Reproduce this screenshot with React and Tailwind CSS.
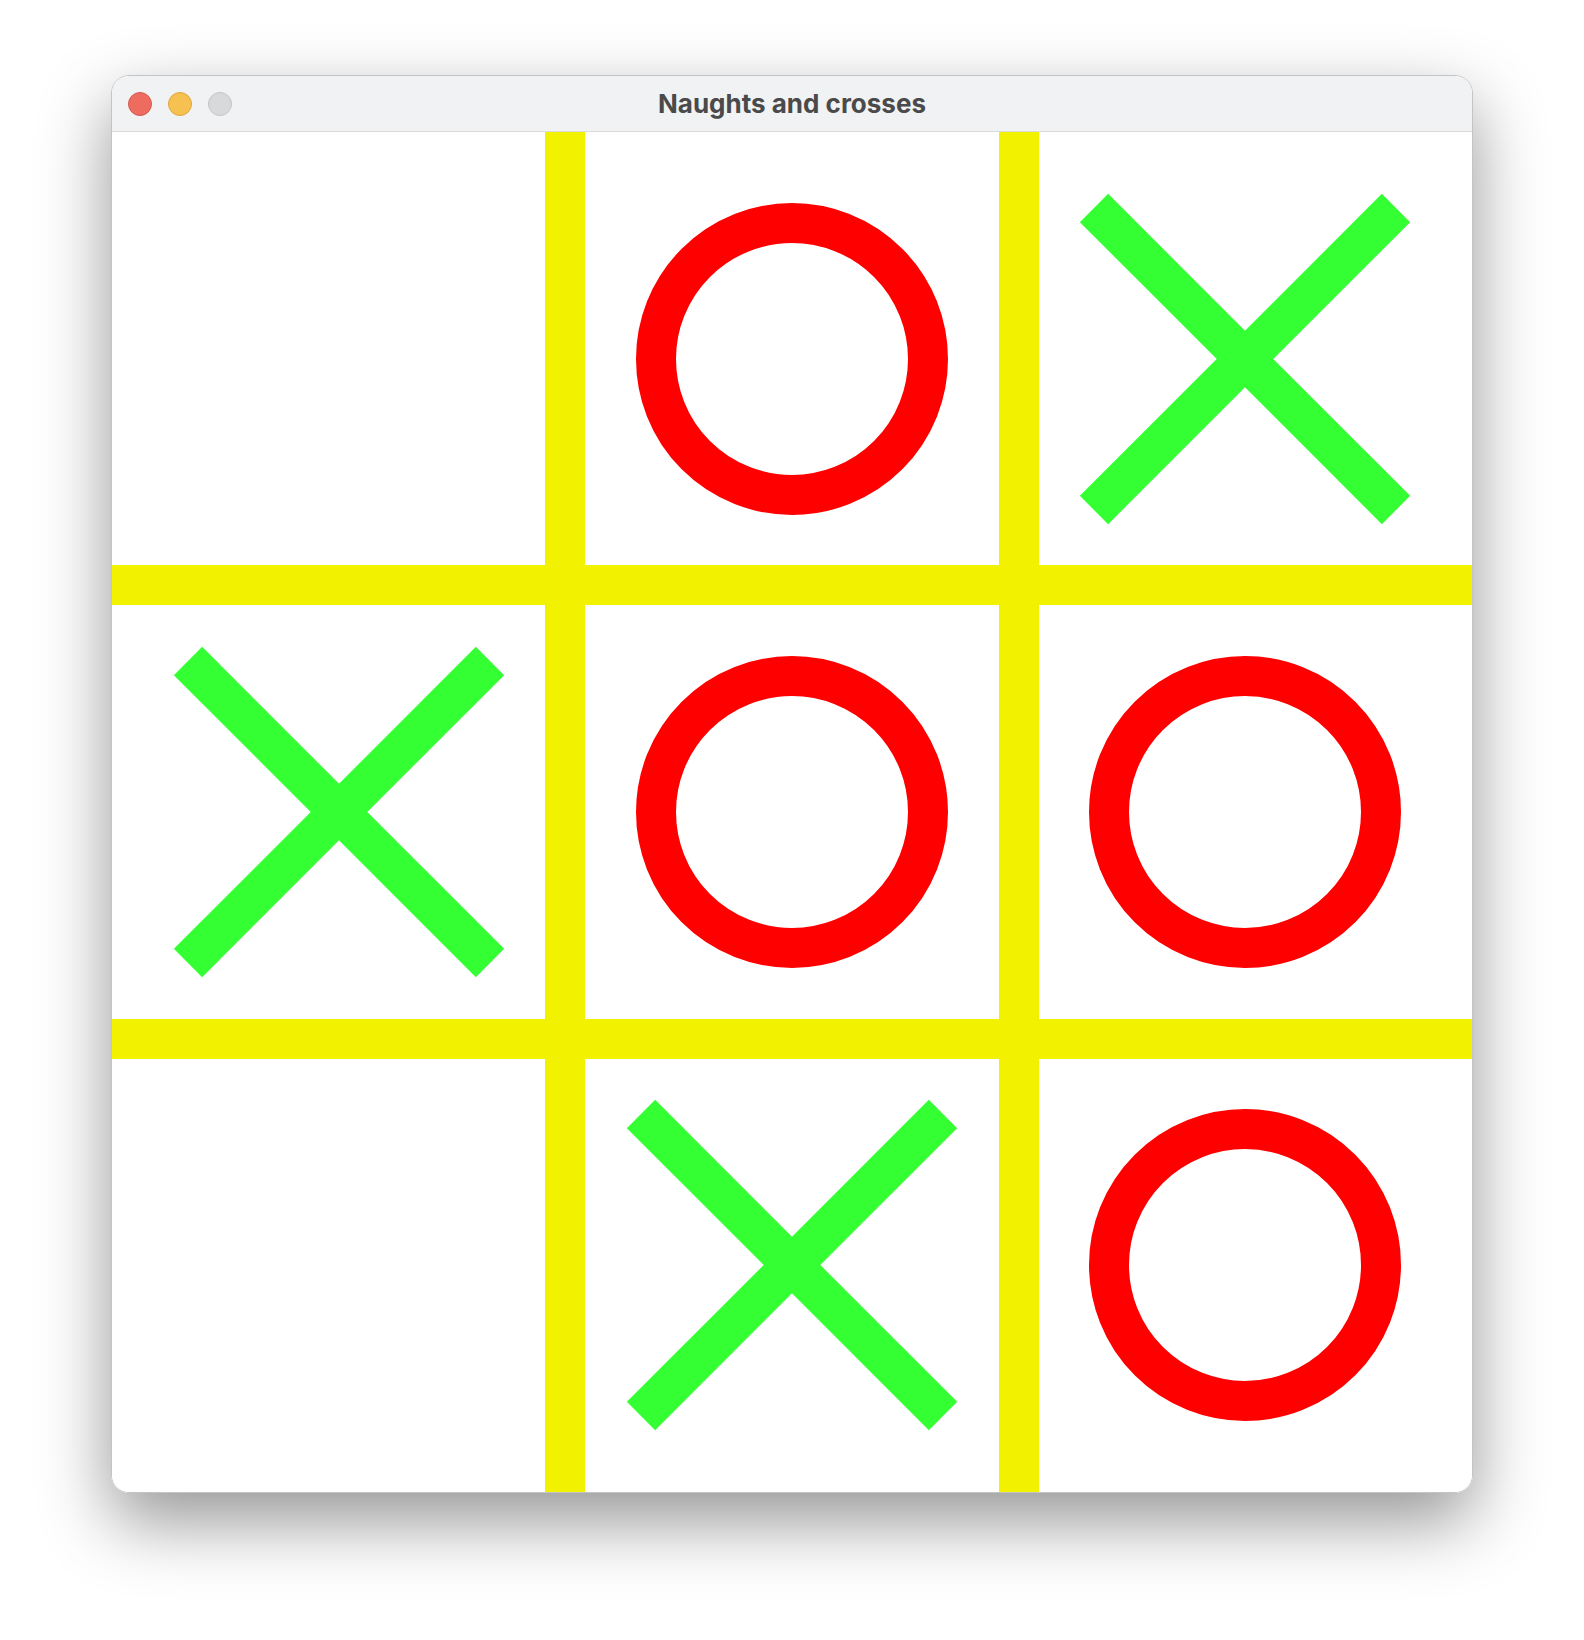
const board = ["", "O", "X", "X", "O", "O", "", "X", "O"];

function Naught() {
  return (
    <svg width="320" height="320" viewBox="0 0 320 320" className="block">
      <circle cx="160" cy="160" r="136" fill="none" stroke="#ff0000" strokeWidth="40" />
    </svg>
  );
}

function Cross() {
  return (
    <svg width="340" height="340" viewBox="0 0 340 340" className="block">
      <g stroke="#33ff33" strokeWidth="40" strokeLinecap="butt">
        <line x1="19" y1="19" x2="321" y2="321" />
        <line x1="321" y1="19" x2="19" y2="321" />
      </g>
    </svg>
  );
}

export default function App() {
  return (
    <div className="min-h-[1640px] bg-white pt-[75px]" style={{ fontFamily: "Inter, 'Noto Sans', sans-serif" }}>
      <div className="mx-auto w-[1360px] rounded-[18px] overflow-hidden border border-[#c4c4c4] shadow-[0_28px_70px_rgba(0,0,0,0.42)] box-content">
        <div className="relative flex h-[56px] items-center border-b border-[#d9d9d9] bg-[#f1f2f4]">
          <div className="flex gap-4 pl-[16px]">
            <span className="h-6 w-6 rounded-full bg-[#ee6b60] border border-[#d65a50]" />
            <span className="h-6 w-6 rounded-full bg-[#f6c150] border border-[#dea73c]" />
            <span className="h-6 w-6 rounded-full bg-[#d8d9db] border border-[#c2c3c5]" />
          </div>
          <div className="absolute inset-0 flex items-center justify-center text-[26px] font-bold text-[#4a4a4a] pointer-events-none">
            Naughts and crosses
          </div>
        </div>
        <div className="relative h-[1360px] w-[1360px] bg-white">
          <div className="grid h-full w-full grid-cols-3 grid-rows-3">
            {board.map((m, i) => (
              <div key={i} className="flex items-center justify-center">
                {m === "O" && <Naught />}
                {m === "X" && <Cross />}
              </div>
            ))}
          </div>
          <div className="absolute top-0 bottom-0 left-[433px] w-10 bg-[#f2f200]" />
          <div className="absolute top-0 bottom-0 left-[887px] w-10 bg-[#f2f200]" />
          <div className="absolute left-0 right-0 top-[433px] h-10 bg-[#f2f200]" />
          <div className="absolute left-0 right-0 top-[887px] h-10 bg-[#f2f200]" />
        </div>
      </div>
    </div>
  );
}
